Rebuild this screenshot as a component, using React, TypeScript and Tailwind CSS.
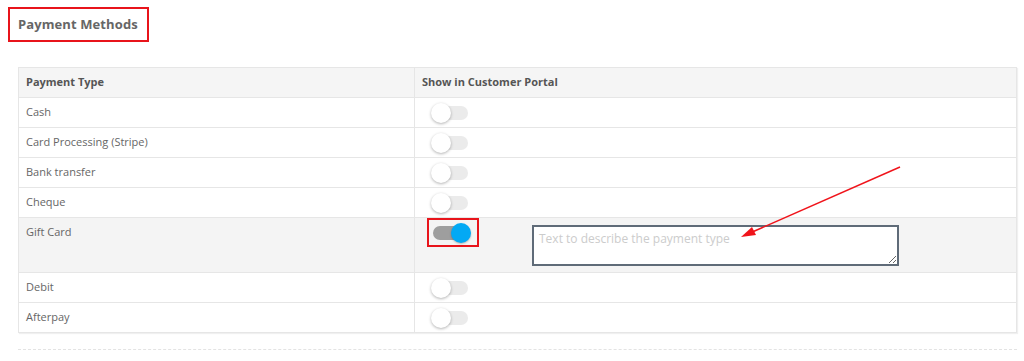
import React from 'react';

type Method = { name: string; enabled?: boolean };

const methods: Method[] = [
  { name: 'Cash' },
  { name: 'Card Processing (Stripe)' },
  { name: 'Bank transfer' },
  { name: 'Cheque' },
  { name: 'Gift Card', enabled: true },
  { name: 'Debit' },
  { name: 'Afterpay' },
];

const Toggle: React.FC<{ on?: boolean }> = ({ on }) =>
  on ? (
    <div className="relative w-[38px] h-[20px] flex items-center">
      <div className="w-[32px] h-[14px] rounded-full bg-[#9e9e9e]" />
      <div className="absolute right-0 top-0 w-[20px] h-[20px] rounded-full bg-[#03a9f4] shadow-[0_1px_2px_rgba(0,0,0,0.25)]" />
    </div>
  ) : (
    <div className="relative w-[38px] h-[20px] flex items-center">
      <div className="w-[34px] h-[14px] ml-[3px] rounded-full bg-[#ebebeb]" />
      <div className="absolute left-0 top-0 w-[20px] h-[20px] rounded-full bg-white shadow-[0_1px_3px_rgba(0,0,0,0.3)]" />
    </div>
  );

export default function App() {
  return (
    <div className="relative w-[1024px] h-[361px] bg-white font-['Open_Sans',sans-serif] text-[#666]">
      <div className="pt-[7px] pl-[8px]">
        <div className="inline-flex items-center h-[35px] border-2 border-[#e8141b] pl-[8px] pr-[9px]">
          <span className="text-[13px] font-bold text-[#666] tracking-[0.1px]">Payment Methods</span>
        </div>
      </div>

      <div className="pl-[18px] pt-[25px] w-[1017px]">
        <table className="w-[999px] border-collapse text-[11px] shadow-[1px_1px_1px_rgba(0,0,0,0.06)]">
          <thead>
            <tr className="h-[30px] bg-[#f5f5f5]">
              <th className="w-[396px] border border-[#e6e6e6] px-[7px] text-left font-bold text-[#555]">Payment Type</th>
              <th className="border border-[#e6e6e6] px-[7px] text-left font-bold text-[#555]">Show in Customer Portal</th>
            </tr>
          </thead>
          <tbody>
            {methods.map((m) =>
              m.enabled ? (
                <tr key={m.name} className="h-[55px] bg-[#f4f4f4]">
                  <td className="border border-[#e6e6e6] px-[7px] pt-[6px] align-top">{m.name}</td>
                  <td className="border border-[#e6e6e6] pl-[12px] pt-0 align-top">
                    <div className="flex items-start">
                      <div className="border-2 border-[#e8141b] w-[52px] h-[29px] pl-[4px] flex items-center">
                        <Toggle on />
                      </div>
                      <textarea
                        className="ml-[53px] mt-[7px] w-[367px] h-[41px] border-2 border-[#5f6b78] bg-white px-[5px] py-[3px] text-[12px] text-[#666] placeholder:text-[#cccccc] outline-none"
                        placeholder="Text to describe the payment type"
                      />
                    </div>
                  </td>
                </tr>
              ) : (
                <tr key={m.name} className="h-[30px] bg-white">
                  <td className="border border-[#e6e6e6] px-[7px]">{m.name}</td>
                  <td className="border border-[#e6e6e6] pl-[16px]">
                    <Toggle />
                  </td>
                </tr>
              )
            )}
          </tbody>
        </table>
        <div className="mt-[16px] w-[999px] border-t border-dashed border-[#e3e3e3]" />
      </div>

      <svg className="absolute left-0 top-0 pointer-events-none" width="1024" height="361">
        <line x1="900" y1="167" x2="750" y2="233" stroke="#f0141b" strokeWidth="1.5" />
        <polygon points="741,237 752,227 756,235" fill="#f0141b" />
      </svg>
    </div>
  );
}
